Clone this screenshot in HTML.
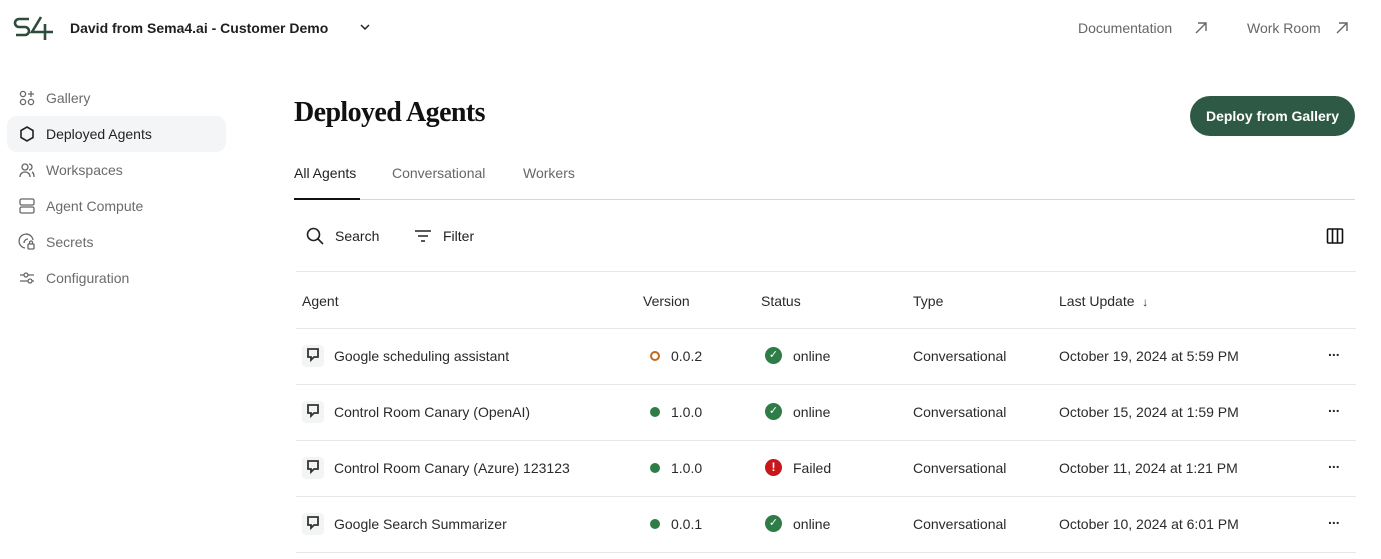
<!DOCTYPE html>
<html><head><style>
*{margin:0;padding:0;box-sizing:border-box}
body{width:1381px;height:559px;background:#fff;font-family:"Liberation Sans",sans-serif;color:#1f1f1f;position:relative;overflow:hidden;font-size:14px}
.a{position:absolute;white-space:nowrap}
.nav{position:absolute;left:18px;font-size:14px;color:#6b6b6b;display:flex;align-items:center;gap:10px;height:20px}
.nav svg{width:18px;height:18px}
.g{color:#666}
.row{position:absolute;left:296px;width:1060px;height:56px;border-bottom:1px solid #e8e8e8}
.row span{position:absolute;top:19px;white-space:nowrap;font-size:14px;color:#2a2a2a}
.row svg{position:absolute}
.hd{color:#777;font-size:14px}
</style></head><body>
<svg class="a" style="left:13px;top:14px" width="42" height="28" viewBox="0 0 42 28"><path d="M16 5 H6 a4 4 0 0 0 0 8 H12 a4 4 0 0 1 0 8 H3" fill="none" stroke="#2d4c3c" stroke-width="2.6"/><path d="M28 3 L19 18 H40 M32 10 V26" fill="none" stroke="#2d4c3c" stroke-width="2.6"/></svg>
<div class="a" style="left:70px;top:20px;font-weight:bold;font-size:14px">David from Sema4.ai - Customer Demo</div>
<svg class="a" style="left:360px;top:23px" width="10" height="8"><path d="M1 2 L5 6 L9 2" fill="none" stroke="#222" stroke-width="1.5"/></svg>
<div class="a g" style="left:1078px;top:20px">Documentation</div>
<svg class="a" style="left:1193px;top:20px" width="16" height="16"><path d="M3 13 L13 3 M5 3 H13 V11" fill="none" stroke="#666" stroke-width="1.4"/></svg>
<div class="a g" style="left:1247px;top:20px">Work Room</div>
<svg class="a" style="left:1334px;top:20px" width="16" height="16"><path d="M3 13 L13 3 M5 3 H13 V11" fill="none" stroke="#666" stroke-width="1.4"/></svg>

<div class="a" style="left:7px;top:116px;width:219px;height:36px;background:#f4f5f6;border-radius:10px"></div>
<div class="nav" style="top:88px"><svg viewBox="0 0 18 18" fill="none" stroke="#666" stroke-width="1.3"><circle cx="5" cy="5" r="2.6"/><circle cx="5" cy="13" r="2.6"/><circle cx="13" cy="13" r="2.6"/><path d="M13 2v6M10 5h6"/></svg>Gallery</div>
<div class="nav" style="top:124px;color:#222"><svg viewBox="0 0 18 18" fill="none" stroke="#222" stroke-width="1.6"><path d="M9 2 L15 5.5 V12.5 L9 16 L3 12.5 V5.5 Z"/></svg>Deployed Agents</div>
<div class="nav" style="top:160px"><svg viewBox="0 0 18 18" fill="none" stroke="#666" stroke-width="1.3"><circle cx="7" cy="6" r="3"/><path d="M2 16c0-3 2-5 5-5s5 2 5 5M11 3a3 3 0 0 1 0 6M14 11c2 1 2 3 2 5"/></svg>Workspaces</div>
<div class="nav" style="top:196px"><svg viewBox="0 0 18 18" fill="none" stroke="#666" stroke-width="1.3"><rect x="2" y="2" width="14" height="6" rx="1.5"/><rect x="2" y="10" width="14" height="6" rx="1.5"/></svg>Agent Compute</div>
<div class="nav" style="top:232px"><svg viewBox="0 0 18 18" fill="none" stroke="#666" stroke-width="1.3"><path d="M15 7A7 7 0 1 0 7 15"/><path d="M10 6a4 4 0 0 0-4 4"/><rect x="10" y="11" width="6" height="5" rx="1"/><path d="M11.5 11V9.5a1.5 1.5 0 0 1 3 0V11"/></svg>Secrets</div>
<div class="nav" style="top:268px"><svg viewBox="0 0 18 18" fill="none" stroke="#666" stroke-width="1.3"><path d="M2 6h4M10 6h6M2 12h8M14 12h2"/><circle cx="8" cy="6" r="2"/><circle cx="12" cy="12" r="2"/></svg>Configuration</div>

<div class="a" style="left:294px;top:97px;font-family:'Liberation Serif',serif;font-size:28px;font-weight:bold;letter-spacing:-0.6px;color:#111">Deployed Agents</div>
<div class="a" style="left:1190px;top:96px;width:165px;height:40px;border-radius:20px;background:#2e5a45;color:#fff;font-weight:bold;font-size:14px;text-align:center;line-height:40px">Deploy from Gallery</div>

<div class="a" style="left:294px;top:165px;color:#222">All Agents</div>
<div class="a g" style="left:392px;top:165px">Conversational</div>
<div class="a g" style="left:523px;top:165px">Workers</div>
<div class="a" style="left:294px;top:199px;width:1061px;height:1px;background:#d6d6d6"></div>
<div class="a" style="left:294px;top:198px;width:66px;height:2px;background:#111"></div>

<svg class="a" style="left:306px;top:227px" width="18" height="18" fill="none" stroke="#222" stroke-width="1.6"><circle cx="7.5" cy="7.5" r="6"/><path d="M12 12 L17 17"/></svg>
<div class="a" style="left:335px;top:228px">Search</div>
<svg class="a" style="left:414px;top:228px" width="18" height="16" stroke="#222" stroke-width="1.6"><path d="M1 3h16M4 8h10M7 13h4"/></svg>
<div class="a" style="left:443px;top:228px">Filter</div>
<svg class="a" style="left:1326px;top:227px" width="18" height="18" fill="none" stroke="#111" stroke-width="1.6"><rect x="1.5" y="2" width="15" height="14" rx="1"/><path d="M6.5 2v14M11.5 2v14"/></svg>
<div class="a" style="left:296px;top:271px;width:1060px;height:1px;background:#e8e8e8"></div>

<div class="row" style="top:273px"><span class="hd" style="left:6px;top:20px">Agent</span><span class="hd" style="left:347px;top:20px">Version</span><span class="hd" style="left:465px;top:20px">Status</span><span class="hd" style="left:617px;top:20px">Type</span><span class="hd" style="left:763px;top:20px">Last Update &nbsp;<span style="position:static;font-size:12px">↓</span></span></div>

<div class="row" style="top:329px"><span style="left:6px;top:16px;width:22px;height:22px;background:#f3f5f4;border-radius:4px"></span><svg style="left:11px;top:19px" width="12" height="14" fill="none" stroke="#333" stroke-width="1.8"><path d="M1 1H11V9H7L4 12V9H1Z"/></svg><span style="left:38px">Google scheduling assistant</span><span style="left:354px;top:22px;width:10px;height:10px;border:2px solid #c26a1e;border-radius:50%"></span><span style="left:375px">0.0.2</span><span style="left:469px;top:18px;width:17px;height:17px;background:#2e7d46;border-radius:50%;color:#fff;font-size:11px;text-align:center;line-height:17px">✓</span><span style="left:497px">online</span><span style="left:617px">Conversational</span><span style="left:763px">October 19, 2024 at 5:59 PM</span><span style="left:1032px;top:14px;font-weight:bold">...</span></div>
<div class="row" style="top:385px"><span style="left:6px;top:16px;width:22px;height:22px;background:#f3f5f4;border-radius:4px"></span><svg style="left:11px;top:19px" width="12" height="14" fill="none" stroke="#333" stroke-width="1.8"><path d="M1 1H11V9H7L4 12V9H1Z"/></svg><span style="left:38px">Control Room Canary (OpenAI)</span><span style="left:354px;top:22px;width:10px;height:10px;background:#2e7d46;border-radius:50%"></span><span style="left:375px">1.0.0</span><span style="left:469px;top:18px;width:17px;height:17px;background:#2e7d46;border-radius:50%;color:#fff;font-size:11px;text-align:center;line-height:17px">✓</span><span style="left:497px">online</span><span style="left:617px">Conversational</span><span style="left:763px">October 15, 2024 at 1:59 PM</span><span style="left:1032px;top:14px;font-weight:bold">...</span></div>
<div class="row" style="top:441px"><span style="left:6px;top:16px;width:22px;height:22px;background:#f3f5f4;border-radius:4px"></span><svg style="left:11px;top:19px" width="12" height="14" fill="none" stroke="#333" stroke-width="1.8"><path d="M1 1H11V9H7L4 12V9H1Z"/></svg><span style="left:38px">Control Room Canary (Azure) 123123</span><span style="left:354px;top:22px;width:10px;height:10px;background:#2e7d46;border-radius:50%"></span><span style="left:375px">1.0.0</span><span style="left:469px;top:18px;width:17px;height:17px;background:#c8161d;border-radius:50%;color:#fff;font-size:12px;font-weight:bold;text-align:center;line-height:17px">!</span><span style="left:497px">Failed</span><span style="left:617px">Conversational</span><span style="left:763px">October 11, 2024 at 1:21 PM</span><span style="left:1032px;top:14px;font-weight:bold">...</span></div>
<div class="row" style="top:497px"><span style="left:6px;top:16px;width:22px;height:22px;background:#f3f5f4;border-radius:4px"></span><svg style="left:11px;top:19px" width="12" height="14" fill="none" stroke="#333" stroke-width="1.8"><path d="M1 1H11V9H7L4 12V9H1Z"/></svg><span style="left:38px">Google Search Summarizer</span><span style="left:354px;top:22px;width:10px;height:10px;background:#2e7d46;border-radius:50%"></span><span style="left:375px">0.0.1</span><span style="left:469px;top:18px;width:17px;height:17px;background:#2e7d46;border-radius:50%;color:#fff;font-size:11px;text-align:center;line-height:17px">✓</span><span style="left:497px">online</span><span style="left:617px">Conversational</span><span style="left:763px">October 10, 2024 at 6:01 PM</span><span style="left:1032px;top:14px;font-weight:bold">...</span></div>
</body></html>
